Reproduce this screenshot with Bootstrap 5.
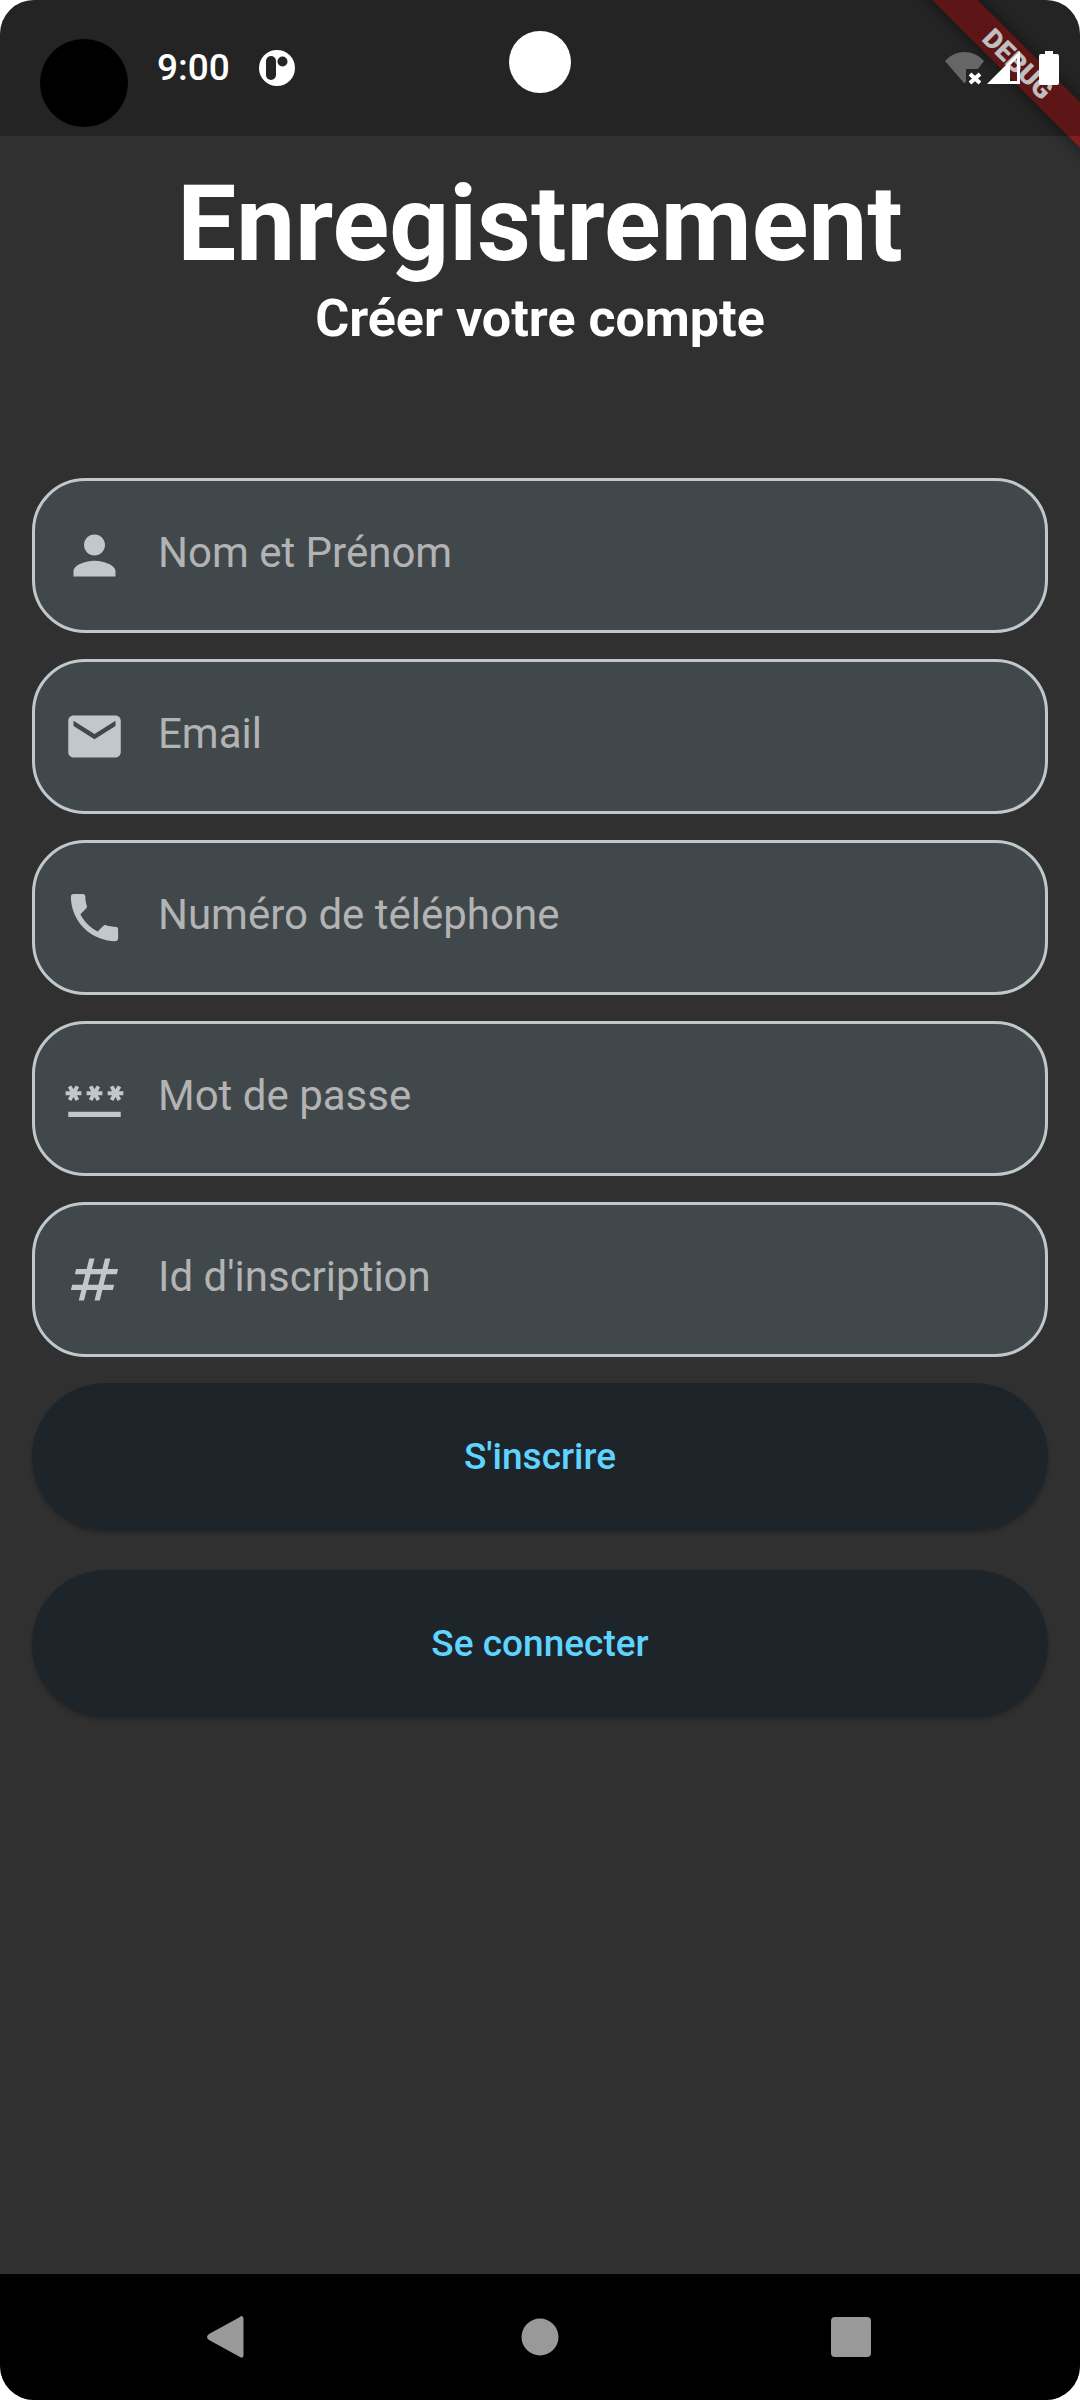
<!DOCTYPE html>
<html lang="fr">
<head>
<meta charset="utf-8">
<meta name="viewport" content="width=device-width, initial-scale=1">
<title>Enregistrement</title>
<link href="https://cdn.jsdelivr.net/npm/bootstrap@5.3.0/dist/css/bootstrap.min.css" rel="stylesheet">
<style>
  body { background: #fff; font-family: Roboto, "Liberation Sans", sans-serif; }
  .phone-screen { background: #303030; border-radius: 34px; }
  .status-strip { height: 136px; background: rgba(0, 0, 0, .25); z-index: 2; }
  .debug-ribbon { width: 180px; height: 180px; z-index: 1; }
  .debug-ribbon text { font: 900 27px Roboto, sans-serif; }
  .lens-left { left: 40px; top: 39px; width: 88px; height: 88px; background: #000; }
  .lens-center { left: 50%; top: 31px; width: 62px; height: 62px; background: #fff; }
  .clock-group { padding: 48px 0 0 157px; gap: 27px; height: 88px; }
  .clock { font-size: 37px; line-height: 40px; font-weight: 500; color: #fff; }
  .indicators { padding: 48px 20px 0 0; height: 88px; }
  .main-area { padding: 27px 32px; }
  .page-title { font-size: 105px; line-height: 124px; font-weight: 700; }
  .page-subtitle { font-size: 52px; line-height: 64px; font-weight: 700; margin-bottom: 127px; }
  .field-stack { gap: 26px; margin-bottom: 26px; }
  .field-box { height: 155px; border: 3px solid #c0c8cc; border-radius: 53px; background: #41484b; color: #c0c8cc; padding: 0 28px; gap: 32px; }
  .field-box svg { width: 63px; height: 63px; flex: none; }
  .field-box .form-control { font-size: 42px; line-height: 50px; padding: 0 0 6px; color: #fff; box-shadow: none; }
  .field-box .form-control::placeholder { color: #b3b3b3; opacity: 1; }
  .action-stack { gap: 40px; }
  .btn-action { height: 147px; font-size: 37px; font-weight: 500; --bs-btn-color: #5fd4fe; --bs-btn-bg: #1d252a; --bs-btn-hover-color: #5fd4fe; --bs-btn-hover-bg: #243036; --bs-btn-border-width: 0; box-shadow: 0 3px 4px rgba(0, 0, 0, .25); }
  .system-nav { height: 126px; background: #000; border-radius: 0 0 34px 34px; padding: 0 74px; }
  .system-nav svg { width: 48px; height: 48px; fill: #999; }
</style>
</head>
<body>
<div class="phone-screen d-flex flex-column min-vh-100 position-relative overflow-hidden">

  <svg class="debug-ribbon position-absolute top-0 end-0" viewBox="0 0 180 180" aria-label="Debug">
    <defs><filter id="soft" x="-20%" y="-100%" width="140%" height="300%"><feGaussianBlur stdDeviation="8"/></filter></defs>
    <g transform="translate(117 62) rotate(45)">
      <rect x="-170" y="-16" width="340" height="32" fill="#000" opacity=".5" filter="url(#soft)"/>
      <rect x="-170" y="-16" width="340" height="32" fill="#b71c1c" fill-opacity=".627"/>
      <text x="2" y="10" text-anchor="middle" fill="#fff">DEBUG</text>
    </g>
  </svg>

  <header class="status-strip position-relative d-flex justify-content-between">
    <span class="lens-left position-absolute rounded-circle"></span>
    <span class="lens-center position-absolute rounded-circle translate-middle-x"></span>
    <div class="clock-group d-flex align-items-center">
      <span class="clock">9:00</span>
      <svg width="40" height="40" viewBox="0 0 40 40"><circle cx="20" cy="20" r="18" fill="#fff"/><rect x="9" y="8" width="10" height="24" rx="5" fill="#242424"/><circle cx="25.500" cy="13.500" r="5" fill="#242424"/></svg>
    </div>
    <div class="indicators d-flex">
      <svg width="120" height="40" viewBox="0 0 120 40">
        <path d="M5 13C16 1 33 1 44 13L38 21H26V34L24 35Z" fill="#666"/>
        <path d="M30 26l10 9M40 26l-10 9" stroke="#fff" stroke-width="4"/>
        <path d="M47 36 80 3V36ZM70 17V33H77V10Z" fill="#fff" fill-rule="evenodd"/>
        <path d="M105 3h8v3h4q2 0 2 2v27q0 2-2 2h-16q-2 0-2-2V8q0-2 2-2h4z" fill="#fff"/>
      </svg>
    </div>
  </header>

  <main class="main-area flex-grow-1">
    <h1 class="page-title text-white text-center m-0">Enregistrement</h1>
    <p class="page-subtitle text-white text-center">Créer votre compte</p>
    <form>
      <div class="field-stack d-flex flex-column">
        <label class="field-box d-flex align-items-center">
          <svg viewBox="0 0 24 24" fill="currentColor" aria-hidden="true"><path d="M12 12c2.210 0 4-1.790 4-4s-1.790-4-4-4-4 1.790-4 4 1.790 4 4 4zm0 2c-2.670 0-8 1.340-8 4v2h16v-2c0-2.660-5.330-4-8-4z"/></svg>
          <input class="form-control border-0 bg-transparent" type="text" placeholder="Nom et Prénom" aria-label="Nom et Prénom">
        </label>
        <label class="field-box d-flex align-items-center">
          <svg viewBox="0 0 24 24" fill="currentColor" aria-hidden="true"><path d="M20 4H4c-1.100 0-1.990.9-1.990 2L2 18c0 1.100.9 2 2 2h16c1.100 0 2-.9 2-2V6c0-1.100-.9-2-2-2zm0 4-8 5-8-5V6l8 5 8-5v2z"/></svg>
          <input class="form-control border-0 bg-transparent" type="email" placeholder="Email" aria-label="Email">
        </label>
        <label class="field-box d-flex align-items-center">
          <svg viewBox="0 0 24 24" fill="currentColor" aria-hidden="true"><path d="M6.620 10.790c1.440 2.830 3.760 5.140 6.590 6.590l2.200-2.200c.27-.27.67-.36 1.020-.24 1.120.37 2.330.57 3.570.57.55 0 1 .45 1 1V20c0 .55-.45 1-1 1-9.390 0-17-7.610-17-17 0-.55.45-1 1-1h3.500c.55 0 1 .45 1 1 0 1.250.2 2.450.57 3.570.11.35.03.74-.25 1.020l-2.200 2.200z"/></svg>
          <input class="form-control border-0 bg-transparent" type="tel" placeholder="Numéro de téléphone" aria-label="Numéro de téléphone">
        </label>
        <label class="field-box d-flex align-items-center">
          <svg viewBox="0 0 24 24" fill="currentColor" aria-hidden="true"><path d="M2 17h20v2H2v-2zm1.150-4.050L4 11.470l.85 1.480 1.300-.75-.85-1.480H7v-1.500H5.300l.85-1.470L4.850 7 4 8.470 3.150 7l-1.300.75.85 1.470H1v1.500h1.700l-.85 1.480 1.300.75zm6.700-.75l1.300.75.85-1.480.85 1.480 1.300-.75-.85-1.480H15v-1.500h-1.700l.85-1.470-1.300-.75L12 8.470 11.150 7l-1.300.75.85 1.470H9v1.500h1.700l-.85 1.480zM23 9.220h-1.700l.85-1.470-1.300-.75L20 8.470 19.150 7l-1.300.75.85 1.470H17v1.500h1.700l-.85 1.480 1.300.75.85-1.480.85 1.480 1.300-.75-.85-1.480H23v-1.500z"/></svg>
          <input class="form-control border-0 bg-transparent" type="password" placeholder="Mot de passe" aria-label="Mot de passe">
        </label>
        <label class="field-box d-flex align-items-center">
          <svg viewBox="0 0 24 24" fill="currentColor" aria-hidden="true"><path d="M20.500 10 21 8h-4l1-4h-2l-1 4h-4l1-4h-2L9 8H5l-.5 2h4l-1 4h-4L3 16h4l-1 4h2l1-4h4l-1 4h2l1-4h4l.5-2h-4l1-4h4zm-7 4h-4l1-4h4l-1 4z"/></svg>
          <input class="form-control border-0 bg-transparent" type="text" placeholder="Id d'inscription" aria-label="Id d'inscription">
        </label>
      </div>
      <div class="action-stack d-flex flex-column">
        <button class="btn btn-action rounded-pill w-100" type="submit">S'inscrire</button>
        <button class="btn btn-action rounded-pill w-100" type="button">Se connecter</button>
      </div>
    </form>
  </main>

  <nav class="system-nav d-flex">
    <button class="btn border-0 flex-fill p-0" type="button" aria-label="Retour"><svg viewBox="0 0 48 48"><path d="M36 3Q38.500 3 38.500 6V42Q38.500 46 35 44L4 27Q0 24 4 21L35 4Z"/></svg></button>
    <button class="btn border-0 flex-fill p-0" type="button" aria-label="Accueil"><svg viewBox="0 0 48 48"><circle cx="24" cy="24" r="18.500"/></svg></button>
    <button class="btn border-0 flex-fill p-0" type="button" aria-label="Applications"><svg viewBox="0 0 48 48"><rect x="4" y="4" width="40" height="40" rx="4"/></svg></button>
  </nav>
</div>
<script src="https://cdn.jsdelivr.net/npm/bootstrap@5.3.0/dist/js/bootstrap.bundle.min.js"></script>
</body>
</html>
